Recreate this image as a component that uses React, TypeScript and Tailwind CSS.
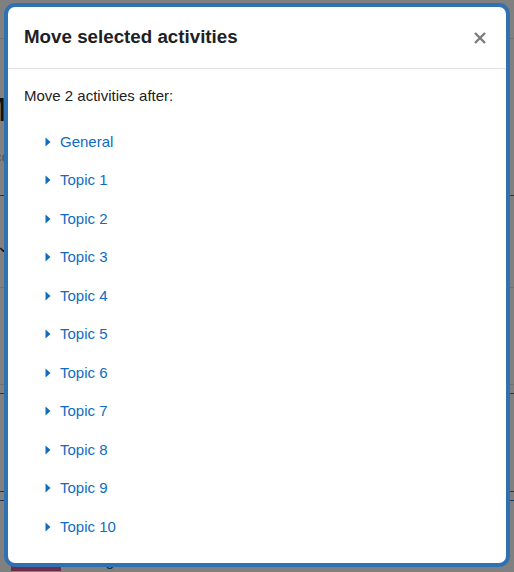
import React from "react";

const topics = [
  "General",
  "Topic 1",
  "Topic 2",
  "Topic 3",
  "Topic 4",
  "Topic 5",
  "Topic 6",
  "Topic 7",
  "Topic 8",
  "Topic 9",
  "Topic 10",
];

function Caret() {
  return (
    <svg width="6" height="10" viewBox="0 0 6 10" className="shrink-0">
      <path d="M0.5 0.5 L5.5 5 L0.5 9.5 Z" fill="#0f6cbf" />
    </svg>
  );
}

export default function App() {
  return (
    <div
      className="relative w-[514px] h-[572px] overflow-hidden bg-[#808080]"
      style={{ fontFamily: '"Liberation Sans", Arial, sans-serif' }}
    >
      {/* Page behind the backdrop */}
      <div className="flex flex-col w-full">
        <div className="h-[39px] border-b border-[#727272]" />
        <div className="h-[157px] border-b border-[#18375a] flex flex-col">
          <div className="mt-[50px] ml-[-22px] text-[34px] leading-[40px] text-[#0f1113]">
            Mo
          </div>
          <div className="mt-[18px] ml-[-6px] text-[15px] leading-[20px] text-[#505a60]">
            co
          </div>
        </div>
        <div className="h-[92px] border-b border-[#727272] flex flex-col">
          <div className="mt-[40px] ml-[-4px] text-[#111] text-[18px] leading-[20px]">
            ⌄
          </div>
        </div>
        <div className="h-[97px] border-b border-[#727272]" />
        <div className="h-[9px] border-b border-[#18375a]" />
        <div className="h-[98px] border-b border-[#18375a]" />
        <div className="h-[9px] border-b border-[#18375a]" />
        <div className="flex items-end h-[70px]">
          <div className="ml-[11px] w-[50px] h-[20px] bg-[#6c2e4f]" />
          <div className="ml-[14px] text-[16px] leading-[20px] text-[#0a3660]">
            Assignment 6
          </div>
        </div>
      </div>

      {/* Modal */}
      <div className="absolute left-[4px] top-[3px] w-[506px] h-[564px] rounded-[11px] border-[4px] border-[#3071b1] bg-white overflow-hidden flex flex-col">
        <div className="h-[62px] shrink-0 border-b border-[#dee2e6] flex items-center justify-between pl-[16px] pr-[20px]">
          <h5 className="text-[18.75px] leading-[22.5px] font-bold text-[#1d2125]">
            Move selected activities
          </h5>
          <svg width="12" height="12" viewBox="0 0 12 12">
            <path
              d="M1 1 L11 11 M11 1 L1 11"
              stroke="#7a7d80"
              strokeWidth="2.4"
              strokeLinecap="butt"
            />
          </svg>
        </div>
        <div className="flex flex-col px-[16px] pt-[16px]">
          <p className="text-[15px] leading-[22.5px] text-[#1d2125] mb-[15px]">
            Move 2 activities after:
          </p>
          <ul className="flex flex-col pl-[21px]">
            {topics.map((t) => (
              <li key={t} className="h-[38.5px] flex items-center gap-[9px]">
                <Caret />
                <span className="text-[15px] leading-[22.5px] text-[#0f6cbf]">
                  {t}
                </span>
              </li>
            ))}
          </ul>
        </div>
      </div>
    </div>
  );
}
